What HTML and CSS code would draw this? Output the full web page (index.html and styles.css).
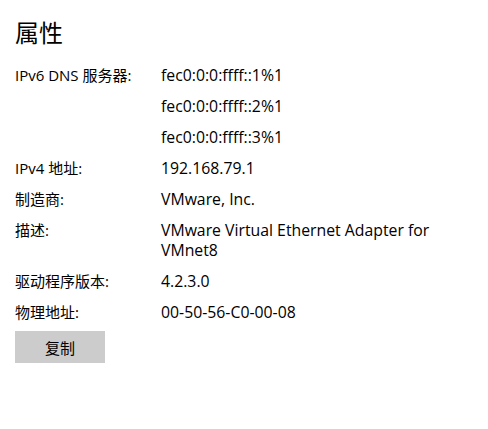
FILE: index.html
```html
<!DOCTYPE html>
<html lang="zh-CN">
<head>
<meta charset="utf-8">
<link rel="stylesheet" href="styles.css">
</head>
<body>
<div class="page">
  <h1 class="title">属性</h1>
  <div class="props">
    <div class="label">IPv6 DNS 服务器:</div>
    <div class="value">fec0:0:0:ffff::1%1</div>
    <div class="label"></div>
    <div class="value">fec0:0:0:ffff::2%1</div>
    <div class="label"></div>
    <div class="value">fec0:0:0:ffff::3%1</div>
    <div class="label">IPv4 地址:</div>
    <div class="value">192.168.79.1</div>
    <div class="label">制造商:</div>
    <div class="value">VMware, Inc.</div>
    <div class="label">描述:</div>
    <div class="value">VMware Virtual Ethernet Adapter for<br>VMnet8</div>
    <div class="label">驱动程序版本:</div>
    <div class="value">4.2.3.0</div>
    <div class="label">物理地址:</div>
    <div class="value">00-50-56-C0-00-08</div>
  </div>
  <button class="copy">复制</button>
</div>
</body>
</html>
```
FILE: styles.css
```css
html, body {
  margin: 0;
  padding: 0;
  background: #ffffff;
}
body {
  font-family: "Open Sans", "Noto Sans CJK SC", sans-serif;
  color: #000000;
  font-size: 15.8px;
}
.page {
  padding: 17px 15px 0 15px;
}
.title {
  margin: 0;
  font-family: "Noto Sans CJK SC", sans-serif;
  font-weight: 400;
  font-size: 24px;
  line-height: 30px;
}
.props {
  margin-top: 18px;
  display: grid;
  grid-template-columns: 146px 1fr;
  row-gap: 11px;
  line-height: 20px;
}
.label {
  font-size: 15px;
}
.copy {
  margin-top: 9px;
  width: 90px;
  height: 32px;
  border: none;
  background: #cccccc;
  font-family: "Noto Sans CJK SC", sans-serif;
  font-size: 15px;
  color: #000000;
  padding: 0;
}
```
